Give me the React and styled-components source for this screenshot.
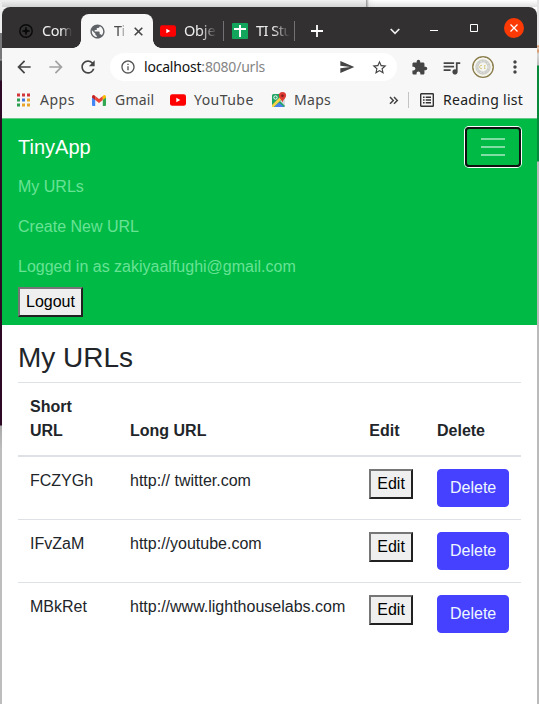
import React from "react";
import styled, { createGlobalStyle, css } from "styled-components";
import {
  MdArrowBack, MdArrowForward, MdRefresh, MdInfoOutline, MdSend, MdStarBorder,
  MdExtension, MdQueueMusic, MdMoreVert, MdPublic,
} from "react-icons/md";

const GlobalStyle = createGlobalStyle`
  * { box-sizing: border-box; }
  body { margin: 0; overflow: hidden; }
`;

const Desktop = styled.div`
  width: 539px;
  height: 704px;
  padding: 7px 2px 0;
  background:
    linear-gradient(#ededed 33px, #77777a 33px, #77777a 59px, #a5a5a5 60px, #454245 61px, #454245 80px, #2d0926 81px, #2d0926 425px, #aaa 426px, #bdbdbd 450px) 0 0 / 2px 100% no-repeat,
    linear-gradient(#e5e5e5 45px, #d89262 46px, #e5d5c9 48px, #d89262 51px, #d5d5d5 54px, #bdbdbd 65px, #078b3b 66px, #078b3b 161px, #bbb 162px) 537px 0 / 2px 100% no-repeat,
    linear-gradient(transparent, rgba(0,0,0,.12)) 0 0 / 100% 7px no-repeat,
    linear-gradient(90deg, #f0f0f0 366px, #999 366px, #f8f8f8 369px, #fff 375px);
`;

const Window = styled.main`
  display: flex;
  flex-direction: column;
  height: 697px;
  border-radius: 8px 8px 0 0;
  overflow: hidden;
  background: #fff;
`;

const TabStrip = styled.header`
  display: flex;
  height: 41px;
  padding-top: 7px;
  background: #323031;
`;

const Tab = styled.div`
  position: relative;
  display: flex;
  align-items: center;
  width: ${(p) => p.$width}px;
  height: 34px;
  padding-left: ${(p) => p.$inset}px;
  gap: ${(p) => p.$gap || 8}px;
  flex: none;
  color: #eee;
  ${(p) => p.$active && css`
    color: #4a4a4a;
    background: #f7f7f7;
    border-radius: 8px 8px 0 0;
    &::before, &::after {
      content: "";
      position: absolute;
      bottom: 0;
      width: 8px;
      height: 8px;
    }
    &::before { left: -8px; background: radial-gradient(circle at 0 0, transparent 7.5px, #f7f7f7 8px); }
    &::after { right: -8px; background: radial-gradient(circle at 100% 0, transparent 7.5px, #f7f7f7 8px); }
  `}
  svg { flex: none; }
`;

const TabTitle = styled.span`
  width: ${(p) => p.$width}px;
  margin-top: -2px;
  white-space: nowrap;
  font: 14.5px/20px "Noto Sans", sans-serif;
  letter-spacing: ${(p) => p.$spacing || 0}px;
  mask-image: linear-gradient(90deg, #000 ${(p) => p.$solid || 50}%, transparent 100%);
`;

const TabRule = styled.i`
  flex: none;
  width: 1px;
  height: 20px;
  margin-top: 7px;
  margin-left: -1px;
  background: #737173;
`;

const StripSlot = styled.div`
  display: flex;
  align-items: center;
  justify-content: center;
  flex: none;
  width: ${(p) => p.$width}px;
  height: 34px;
  margin-left: ${(p) => p.$offset || 0}px;
  padding-bottom: ${(p) => p.$lift || 0}px;
  color: #fff;
`;

const CloseButton = styled.span`
  display: grid;
  place-items: center;
  width: 20px;
  height: 20px;
  border-radius: 50%;
  background: #fb3a05;
`;

const Toolbar = styled.div`
  display: flex;
  align-items: center;
  height: 38px;
  padding-left: 6px;
  flex: none;
  color: #454545;
  background: #f7f7f7;
`;

const ToolSlot = styled.div`
  display: grid;
  place-items: center;
  width: 32px;
  flex: none;
  color: ${(p) => (p.$muted ? "#a2a2a2" : "#454545")};
`;

const AddressBar = styled.div`
  display: flex;
  align-items: center;
  width: 287px;
  height: 28px;
  margin-left: 6px;
  margin-right: 6px;
  padding: 0 2px 0 10px;
  border-radius: 14px;
  background: #fff;
`;

const Address = styled.span`
  flex: 1;
  padding-left: 8px;
  font: 14px/20px "Noto Sans", sans-serif;
  letter-spacing: -0.2px;
  color: #858585;
  white-space: nowrap;
  b { font-weight: 400; color: #111; }
`;

const Bookmarks = styled.div`
  display: flex;
  align-items: center;
  height: 32px;
  padding: 0 0 4px 14px;
  flex: none;
  color: #3e3e3e;
  background: #f7f7f7;
`;

const Bookmark = styled.div`
  display: flex;
  align-items: center;
  flex: none;
  width: ${(p) => p.$width}px;
  gap: ${(p) => p.$gap}px;
  font: 14px/20px "Noto Sans", sans-serif;
  letter-spacing: ${(p) => p.$spacing || 0}px;
  color: ${(p) => (p.$dark ? "#202020" : "#474747")};
  white-space: nowrap;
  svg { flex: none; }
`;

const BookmarkRule = styled.i`
  flex: none;
  width: 1px;
  height: 16px;
  margin-right: 11px;
  background: #c4c4c4;
`;

const Site = styled.div`
  flex: 1;
  font: 16px/24px "Liberation Sans", Arial, sans-serif;
  color: #212529;
  background: #fff;
`;

const Navbar = styled.nav`
  height: 207px;
  padding: 8px 16px;
  border-top: 1px solid #67c886;
  background: #00ba46;
`;

const NavTop = styled.div`
  display: flex;
  align-items: center;
  justify-content: space-between;
  height: 40px;
`;

const Brand = styled.span`
  font-size: 20px;
  line-height: 30px;
  color: #fff;
`;

const Toggler = styled.button`
  display: grid;
  place-items: center;
  width: 56px;
  height: 40px;
  padding: 0;
  border: 2px solid #101010;
  border-radius: 4px;
  box-shadow: 0 0 0 1px #fff;
  background: transparent;
`;

const NavLink = styled.div`
  height: 40px;
  padding: 8px 0;
  color: #68e394;
`;

const PlainButton = styled.button`
  display: block;
  height: 30px;
  margin: 0;
  padding: 1px 6px;
  border: 2px solid;
  border-color: #767676 #212121 #212121 #767676;
  border-radius: 0;
  font: inherit;
  color: #000;
  background: #efefef;
`;

const Content = styled.section`
  padding: 16px 16px 0;
`;

const Heading = styled.h3`
  margin: 0 0 7px;
  font-size: 28px;
  line-height: 34px;
  font-weight: 400;
`;

const Table = styled.div`
  display: flex;
  flex-direction: column;
`;

const Row = styled.div`
  display: grid;
  grid-template-columns: 100px 239.3px 67.7px 96px;
  border-top: 1px solid #dee2e6;
  ${(p) => p.$head && css`
    align-items: end;
    height: 73px;
    font-weight: 700;
    & + div { border-top-width: 2px; }
  `}
`;

const Cell = styled.div`
  padding: 12px;
`;

const DeleteButton = styled.button`
  display: block;
  width: 72px;
  height: 38px;
  padding: 6px 12px;
  border: 1px solid #4641ff;
  border-radius: 4px;
  font: inherit;
  line-height: 24px;
  color: #eef6ff;
  background: #4641ff;
`;

const YouTubeIcon = () => (
  <svg width="16" height="12" viewBox="0 0 16 12">
    <rect y=".3" width="16" height="11.4" rx="2.2" fill="#f00" />
    <path d="M6.3 3.7v4.6l4-2.3z" fill="#fff" />
  </svg>
);

const CompassIcon = () => (
  <svg width="14" height="14" viewBox="0 0 14 14" fill="none" stroke="#090909">
    <circle cx="7" cy="7" r="6.2" strokeWidth="1.4" />
    <path d="M7 3.3v7.4M3.3 7h7.4" strokeWidth="1.5" />
    <path d="M7 4.5 9.5 7 7 9.5 4.5 7z" fill="#090909" stroke="none" />
  </svg>
);

const SheetsIcon = () => (
  <svg width="16" height="16" viewBox="0 0 16 16">
    <rect width="16" height="16" rx="1" fill="#12a65c" />
    <path d="M2 6h12M8 2v12" stroke="#fff" strokeWidth="2" />
  </svg>
);

const APP_DOTS = ["#d2353a", "#d2353a", "#d2353a", "#2a9e51", "#4275d8", "#e8a52c", "#2a9e51", "#e8a52c", "#e8a52c"];

const AppsIcon = () => (
  <svg width="14" height="14" viewBox="0 0 14 14">
    {APP_DOTS.map((fill, i) => (
      <rect key={i} x={1 + (i % 3) * 5} y={0.5 + Math.floor(i / 3) * 5} width="3" height="3" fill={fill} />
    ))}
  </svg>
);

const GmailIcon = () => (
  <svg width="14" height="11" viewBox="0 0 14 11">
    <path d="M0 2v8q0 1 1 1h2.2V4z" fill="#4285f4" />
    <path d="M14 2v8q0 1-1 1h-2.2V4z" fill="#34a853" />
    <path d="M3.2 1.1 7 4l3.8-2.9v4L7 8 3.2 5.1z" fill="#ea4335" />
    <path d="M0 2.5V1.8Q0 0 1.6 0q.6 0 1.6 1.1v4z" fill="#c5221f" />
    <path d="M14 2.5V1.8Q14 0 12.4 0q-.6 0-1.6 1.1v4z" fill="#fbbc04" />
  </svg>
);

const MapsIcon = () => (
  <svg width="16" height="16" viewBox="0 0 16 16">
    <rect x="1" y="2" width="13" height="13" rx="1.5" fill="#20a464" />
    <path d="m1 13 9-9 2 2-9 9H1z" fill="#f6d24a" />
    <path d="m9 9 5 5V6z" fill="#d8dce0" />
    <path d="m3 15 5-4.5 5 4.5z" fill="#4c80ee" />
    <circle cx="4.5" cy="5.5" r="1.7" fill="none" stroke="#fff" />
    <path d="M11.5 0a3.6 3.6 0 0 0-3.6 3.6c0 2.6 2.7 3.5 3.6 7 .9-3.5 3.6-4.4 3.6-7A3.6 3.6 0 0 0 11.5 0z" fill="#df3b35" />
    <circle cx="11.5" cy="3.7" r="1.3" fill="#801d1a" />
  </svg>
);

const ReadingIcon = () => (
  <svg width="14" height="14" viewBox="0 0 14 14" fill="none" stroke="#333">
    <rect x=".7" y=".7" width="12.6" height="12.6" rx=".6" strokeWidth="1.4" />
    <path d="M3 4.2h1.6M3 7h1.6M3 9.8h1.6M5.7 4.2H11M5.7 7H11M5.7 9.8H11" strokeWidth="1.4" />
  </svg>
);

const AvatarIcon = () => (
  <svg width="22" height="22" viewBox="0 0 22 22" fill="none">
    <circle cx="11" cy="11" r="10.2" fill="#e4e4df" stroke="#8d8050" strokeWidth="1.5" />
    <circle cx="11" cy="11" r="8.6" stroke="#f8f7ed" strokeWidth="1.6" />
    <circle cx="11" cy="11" r="6" stroke="#cccdc9" strokeWidth="3" />
    <circle cx="11" cy="11" r="6" stroke="#e4e4e0" strokeWidth="1" strokeDasharray="2 1.5" />
    <circle cx="11" cy="11" r="4.4" fill="#f4f4f0" />
    <path d="M10 9.6a1.6 1.6 0 1 0 0 2.8M12 9.7h1.5M12 11h1.2M12 12.3h1.5" stroke="#c9b955" strokeWidth=".8" />
  </svg>
);

const MoreIcon = () => (
  <svg width="10" height="9" viewBox="0 0 10 9" fill="none" stroke="#444" strokeWidth="1.5">
    <path d="m1 1 3.3 3.4L1 7.8M5 1l3.3 3.4L5 7.8" />
  </svg>
);

const ROWS = [
  ["FCZYGh", "http:// twitter.com"],
  ["IFvZaM", "http://youtube.com"],
  ["MBkRet", "http://www.lighthouselabs.com"],
];

export default function App() {
  return (
    <Desktop>
      <GlobalStyle />
      <Window>
        <TabStrip>
          <Tab $width={79} $inset={17} $gap={9}>
            <CompassIcon />
            <TabTitle $width={30} $spacing={-0.5} $solid={65}>Com</TabTitle>
          </Tab>
          <Tab $width={72} $inset={8} $active>
            <MdPublic size={17} color="#5f6368" />
            <TabTitle $width={12} $spacing={-0.5}>Ti</TabTitle>
            <svg width="9" height="9" viewBox="0 0 9 9" stroke="#454545" strokeWidth="1.6" fill="none">
              <path d="m.7.7 7.6 7.6M8.3.7.7 8.3" />
            </svg>
          </Tab>
          <Tab $width={71} $inset={7}>
            <YouTubeIcon />
            <TabTitle $width={33} $spacing={-0.2}>Obje</TabTitle>
          </Tab>
          <TabRule />
          <Tab $width={71} $inset={8} $gap={8}>
            <SheetsIcon />
            <TabTitle $width={34} $spacing={-0.5}>TI Stu</TabTitle>
          </Tab>
          <TabRule />
          <StripSlot $width={44}>
            <svg width="12" height="12" viewBox="0 0 12 12" stroke="#fff" strokeWidth="1.8"><path d="M6 0v12M0 6h12" /></svg>
          </StripSlot>
          <StripSlot $width={40} $offset={36}>
            <svg width="10" height="7" viewBox="0 0 10 7" stroke="#eee" strokeWidth="1.7" fill="none"><path d="m.7 1 4.3 4.3L9.3 1" /></svg>
          </StripSlot>
          <StripSlot $width={40} $offset={-1} $lift={6}>
            <svg width="8" height="8" viewBox="0 0 8 8" stroke="#fff"><path d="M0 6.5h8" /></svg>
          </StripSlot>
          <StripSlot $width={40} $lift={6}>
            <svg width="8" height="8" viewBox="0 0 8 8" stroke="#fff" fill="none"><path d="M.5.5h7v7h-7z" /></svg>
          </StripSlot>
          <StripSlot $width={40} $lift={6}>
            <CloseButton>
              <svg width="8" height="8" viewBox="0 0 8 8" stroke="#fff" strokeWidth="1.3"><path d="m.5.5 7 7m0-7-7 7" /></svg>
            </CloseButton>
          </StripSlot>
        </TabStrip>

        <Toolbar>
          <ToolSlot><MdArrowBack size={20} /></ToolSlot>
          <ToolSlot $muted><MdArrowForward size={20} /></ToolSlot>
          <ToolSlot><MdRefresh size={20} /></ToolSlot>
          <AddressBar>
            <MdInfoOutline size={16} color="#555" />
            <Address><b>localhost</b>:8080/urls</Address>
            <ToolSlot><MdSend size={16} /></ToolSlot>
            <ToolSlot><MdStarBorder size={17} /></ToolSlot>
          </AddressBar>
          <ToolSlot><MdExtension size={17} /></ToolSlot>
          <ToolSlot><MdQueueMusic size={21} /></ToolSlot>
          <ToolSlot><AvatarIcon /></ToolSlot>
          <ToolSlot><MdMoreVert size={20} /></ToolSlot>
        </Toolbar>

        <Bookmarks>
          <Bookmark $width={76} $gap={10} $spacing={0.5}><AppsIcon />Apps</Bookmark>
          <Bookmark $width={78} $gap={9} $spacing={0.2}><GmailIcon />Gmail</Bookmark>
          <Bookmark $width={101} $gap={8} $spacing={0.45}><YouTubeIcon />YouTube</Bookmark>
          <Bookmark $width={118} $gap={7} $spacing={0.3}><MapsIcon />Maps</Bookmark>
          <Bookmark $width={19}><MoreIcon /></Bookmark>
          <BookmarkRule />
          <Bookmark $width={110} $gap={9} $spacing={0.3} $dark><ReadingIcon />Reading list</Bookmark>
        </Bookmarks>

        <Site>
          <Navbar>
            <NavTop>
              <Brand>TinyApp</Brand>
              <Toggler aria-label="Toggle navigation">
                <svg width="30" height="30" viewBox="0 0 30 30" stroke="rgba(255,255,255,.5)" strokeWidth="2">
                  <path d="M3 7h24M3 15h24M3 23h24" />
                </svg>
              </Toggler>
            </NavTop>
            <NavLink>My URLs</NavLink>
            <NavLink>Create New URL</NavLink>
            <NavLink>Logged in as zakiyaalfughi@gmail.com</NavLink>
            <PlainButton>Logout</PlainButton>
          </Navbar>
          <Content>
            <Heading>My URLs</Heading>
            <Table>
              <Row $head>
                <Cell>Short<br />URL</Cell>
                <Cell>Long URL</Cell>
                <Cell>Edit</Cell>
                <Cell>Delete</Cell>
              </Row>
              {ROWS.map(([id, url]) => (
                <Row key={id}>
                  <Cell>{id}</Cell>
                  <Cell>{url}</Cell>
                  <Cell><PlainButton>Edit</PlainButton></Cell>
                  <Cell><DeleteButton>Delete</DeleteButton></Cell>
                </Row>
              ))}
            </Table>
          </Content>
        </Site>
      </Window>
    </Desktop>
  );
}
